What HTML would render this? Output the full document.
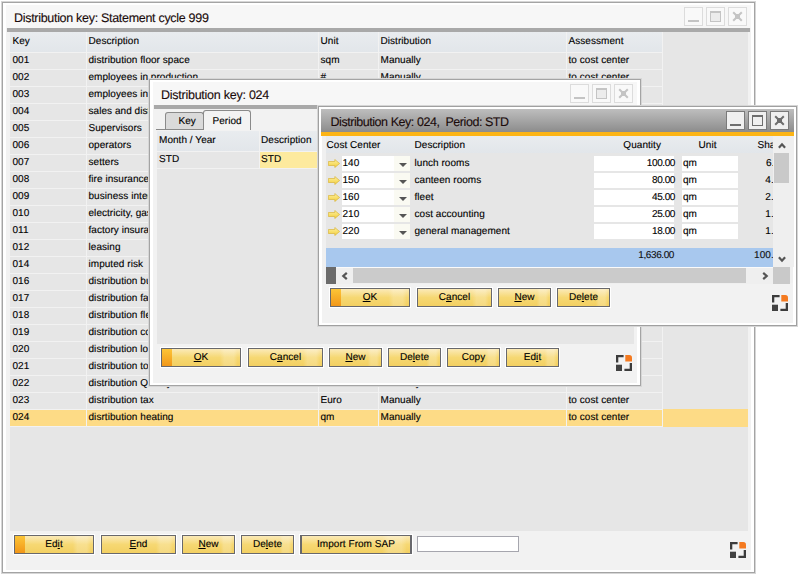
<!DOCTYPE html><html><head><meta charset="utf-8"><style>
html,body{margin:0;padding:0}
body{width:801px;height:578px;background:#fff;position:relative;overflow:hidden;font-family:"Liberation Sans",sans-serif;font-size:10px;color:#000;text-rendering:geometricPrecision}
.b{position:absolute;box-sizing:content-box}
.t{position:absolute;white-space:pre;-webkit-text-stroke:0.12px currentColor}
.win{position:absolute;overflow:hidden}
.btn{position:absolute;border:1px solid #68686c;background:linear-gradient(90deg,rgba(255,255,255,0) 74%,rgba(255,255,255,0.2) 80%,rgba(255,255,255,0.2) 92%,rgba(255,255,255,0) 97%),linear-gradient(#fbeab8 0%,#f6d873 50%,#f3d062 100%);box-shadow:0 0 0 1px #fff;overflow:hidden}
.btn .strip{position:absolute;left:0;top:0;width:10px;height:100%;background:linear-gradient(#fcc537,#f29719)}
.btn .bl{position:absolute;left:0;top:0;text-align:center;font-size:10px;letter-spacing:0.05px;color:#000;-webkit-text-stroke:0.12px currentColor}
u{text-decoration:underline;text-underline-offset:1px;text-decoration-thickness:1px}
</style></head><body>
<div class="b" style="left:2px;top:2px;width:751px;height:569px;border:1px solid #a4a4a4;background:#fff;box-shadow:0 0 0 1px #d6d6d6;"></div>
<div class="b" style="left:6px;top:5px;width:745px;height:565px;background:#f2f2f2;"></div>
<div class="b" style="left:6px;top:5px;width:745px;height:23px;background:#f7f7f7;"></div>
<div class="t" style="left:14px;top:11.47px;font-size:12.5px;line-height:15.0px;color:#1a0a0a;letter-spacing:-0.3px;">Distribution key: Statement cycle 999</div>
<div class="b" style="left:684px;top:7px;width:17px;height:17px;border:1px solid #dcdcdc;background:#f9f9f9;"></div><div class="b" style="left:706px;top:7px;width:17px;height:17px;border:1px solid #dcdcdc;background:#f9f9f9;"></div><div class="b" style="left:728px;top:7px;width:17px;height:17px;border:1px solid #dcdcdc;background:#f9f9f9;"></div><div class="b" style="left:688px;top:20px;width:11px;height:2px;background:#c4c4c4;"></div><div class="b" style="left:710px;top:11px;width:9px;height:8px;border:1px solid #c4c4c4;border-top-width:2px;background:#ececec;"></div><svg class="b" style="left:732px;top:11px" width="11" height="11" viewBox="0 0 11 11"><path d="M1.2 1.2L9.8 9.8M9.8 1.2L1.2 9.8" stroke="#c4c4c4" stroke-width="2"/><rect x="3" y="3" width="5" height="5" fill="#c4c4c4"/></svg>
<div class="b" style="left:7px;top:28px;width:743px;height:4px;background:#a9a9a9;"></div>
<div class="b" style="left:10px;top:32px;width:738px;height:499px;background:#e6e6e6;"></div>
<div class="b" style="left:10px;top:32px;width:652px;height:20px;background:linear-gradient(#e9ecef,#e2e6ea);"></div>
<div class="b" style="left:10px;top:52px;width:652px;height:1px;background:#f2f2f2;"></div>
<div class="t" style="left:12.5px;top:54.53px;font-size:10px;line-height:12.0px;color:#000;letter-spacing:0.05px;">001</div>
<div class="t" style="left:88.5px;top:54.53px;font-size:10px;line-height:12.0px;color:#000;letter-spacing:0.05px;">distribution floor space</div>
<div class="t" style="left:320.5px;top:54.53px;font-size:10px;line-height:12.0px;color:#000;letter-spacing:0.05px;">sqm</div>
<div class="t" style="left:380.5px;top:54.53px;font-size:10px;line-height:12.0px;color:#000;letter-spacing:0.05px;">Manually</div>
<div class="t" style="left:568.5px;top:54.53px;font-size:10px;line-height:12.0px;color:#000;letter-spacing:0.05px;">to cost center</div>
<div class="b" style="left:10px;top:69px;width:652px;height:1px;background:#f2f2f2;"></div>
<div class="t" style="left:12.5px;top:71.53px;font-size:10px;line-height:12.0px;color:#000;letter-spacing:0.05px;">002</div>
<div class="t" style="left:88.5px;top:71.53px;font-size:10px;line-height:12.0px;color:#000;letter-spacing:0.05px;">employees in production</div>
<div class="t" style="left:320.5px;top:71.53px;font-size:10px;line-height:12.0px;color:#000;letter-spacing:0.05px;">#</div>
<div class="t" style="left:380.5px;top:71.53px;font-size:10px;line-height:12.0px;color:#000;letter-spacing:0.05px;">Manually</div>
<div class="t" style="left:568.5px;top:71.53px;font-size:10px;line-height:12.0px;color:#000;letter-spacing:0.05px;">to cost center</div>
<div class="b" style="left:10px;top:86px;width:652px;height:1px;background:#f2f2f2;"></div>
<div class="t" style="left:12.5px;top:88.53px;font-size:10px;line-height:12.0px;color:#000;letter-spacing:0.05px;">003</div>
<div class="t" style="left:88.5px;top:88.53px;font-size:10px;line-height:12.0px;color:#000;letter-spacing:0.05px;">employees in administration</div>
<div class="t" style="left:320.5px;top:88.53px;font-size:10px;line-height:12.0px;color:#000;letter-spacing:0.05px;">#</div>
<div class="t" style="left:380.5px;top:88.53px;font-size:10px;line-height:12.0px;color:#000;letter-spacing:0.05px;">Manually</div>
<div class="t" style="left:568.5px;top:88.53px;font-size:10px;line-height:12.0px;color:#000;letter-spacing:0.05px;">to cost center</div>
<div class="b" style="left:10px;top:103px;width:652px;height:1px;background:#f2f2f2;"></div>
<div class="t" style="left:12.5px;top:105.53px;font-size:10px;line-height:12.0px;color:#000;letter-spacing:0.05px;">004</div>
<div class="t" style="left:88.5px;top:105.53px;font-size:10px;line-height:12.0px;color:#000;letter-spacing:0.05px;">sales and distribution</div>
<div class="t" style="left:320.5px;top:105.53px;font-size:10px;line-height:12.0px;color:#000;letter-spacing:0.05px;">#</div>
<div class="t" style="left:380.5px;top:105.53px;font-size:10px;line-height:12.0px;color:#000;letter-spacing:0.05px;">Manually</div>
<div class="t" style="left:568.5px;top:105.53px;font-size:10px;line-height:12.0px;color:#000;letter-spacing:0.05px;">to cost center</div>
<div class="b" style="left:10px;top:120px;width:652px;height:1px;background:#f2f2f2;"></div>
<div class="t" style="left:12.5px;top:122.53px;font-size:10px;line-height:12.0px;color:#000;letter-spacing:0.05px;">005</div>
<div class="t" style="left:88.5px;top:122.53px;font-size:10px;line-height:12.0px;color:#000;letter-spacing:0.05px;">Supervisors</div>
<div class="t" style="left:320.5px;top:122.53px;font-size:10px;line-height:12.0px;color:#000;letter-spacing:0.05px;">#</div>
<div class="t" style="left:380.5px;top:122.53px;font-size:10px;line-height:12.0px;color:#000;letter-spacing:0.05px;">Manually</div>
<div class="t" style="left:568.5px;top:122.53px;font-size:10px;line-height:12.0px;color:#000;letter-spacing:0.05px;">to cost center</div>
<div class="b" style="left:10px;top:137px;width:652px;height:1px;background:#f2f2f2;"></div>
<div class="t" style="left:12.5px;top:139.53px;font-size:10px;line-height:12.0px;color:#000;letter-spacing:0.05px;">006</div>
<div class="t" style="left:88.5px;top:139.53px;font-size:10px;line-height:12.0px;color:#000;letter-spacing:0.05px;">operators</div>
<div class="t" style="left:320.5px;top:139.53px;font-size:10px;line-height:12.0px;color:#000;letter-spacing:0.05px;">#</div>
<div class="t" style="left:380.5px;top:139.53px;font-size:10px;line-height:12.0px;color:#000;letter-spacing:0.05px;">Manually</div>
<div class="t" style="left:568.5px;top:139.53px;font-size:10px;line-height:12.0px;color:#000;letter-spacing:0.05px;">to cost center</div>
<div class="b" style="left:10px;top:154px;width:652px;height:1px;background:#f2f2f2;"></div>
<div class="t" style="left:12.5px;top:156.53px;font-size:10px;line-height:12.0px;color:#000;letter-spacing:0.05px;">007</div>
<div class="t" style="left:88.5px;top:156.53px;font-size:10px;line-height:12.0px;color:#000;letter-spacing:0.05px;">setters</div>
<div class="t" style="left:320.5px;top:156.53px;font-size:10px;line-height:12.0px;color:#000;letter-spacing:0.05px;">#</div>
<div class="t" style="left:380.5px;top:156.53px;font-size:10px;line-height:12.0px;color:#000;letter-spacing:0.05px;">Manually</div>
<div class="t" style="left:568.5px;top:156.53px;font-size:10px;line-height:12.0px;color:#000;letter-spacing:0.05px;">to cost center</div>
<div class="b" style="left:10px;top:171px;width:652px;height:1px;background:#f2f2f2;"></div>
<div class="t" style="left:12.5px;top:173.53px;font-size:10px;line-height:12.0px;color:#000;letter-spacing:0.05px;">008</div>
<div class="t" style="left:88.5px;top:173.53px;font-size:10px;line-height:12.0px;color:#000;letter-spacing:0.05px;">fire insurance</div>
<div class="t" style="left:320.5px;top:173.53px;font-size:10px;line-height:12.0px;color:#000;letter-spacing:0.05px;">Euro</div>
<div class="t" style="left:380.5px;top:173.53px;font-size:10px;line-height:12.0px;color:#000;letter-spacing:0.05px;">Manually</div>
<div class="t" style="left:568.5px;top:173.53px;font-size:10px;line-height:12.0px;color:#000;letter-spacing:0.05px;">to cost center</div>
<div class="b" style="left:10px;top:188px;width:652px;height:1px;background:#f2f2f2;"></div>
<div class="t" style="left:12.5px;top:190.53px;font-size:10px;line-height:12.0px;color:#000;letter-spacing:0.05px;">009</div>
<div class="t" style="left:88.5px;top:190.53px;font-size:10px;line-height:12.0px;color:#000;letter-spacing:0.05px;">business interruption</div>
<div class="t" style="left:320.5px;top:190.53px;font-size:10px;line-height:12.0px;color:#000;letter-spacing:0.05px;">Euro</div>
<div class="t" style="left:380.5px;top:190.53px;font-size:10px;line-height:12.0px;color:#000;letter-spacing:0.05px;">Manually</div>
<div class="t" style="left:568.5px;top:190.53px;font-size:10px;line-height:12.0px;color:#000;letter-spacing:0.05px;">to cost center</div>
<div class="b" style="left:10px;top:205px;width:652px;height:1px;background:#f2f2f2;"></div>
<div class="t" style="left:12.5px;top:207.53px;font-size:10px;line-height:12.0px;color:#000;letter-spacing:0.05px;">010</div>
<div class="t" style="left:88.5px;top:207.53px;font-size:10px;line-height:12.0px;color:#000;letter-spacing:0.05px;">electricity, gas, water</div>
<div class="t" style="left:320.5px;top:207.53px;font-size:10px;line-height:12.0px;color:#000;letter-spacing:0.05px;">kWh</div>
<div class="t" style="left:380.5px;top:207.53px;font-size:10px;line-height:12.0px;color:#000;letter-spacing:0.05px;">Manually</div>
<div class="t" style="left:568.5px;top:207.53px;font-size:10px;line-height:12.0px;color:#000;letter-spacing:0.05px;">to cost center</div>
<div class="b" style="left:10px;top:222px;width:652px;height:1px;background:#f2f2f2;"></div>
<div class="t" style="left:12.5px;top:224.53px;font-size:10px;line-height:12.0px;color:#000;letter-spacing:0.05px;">011</div>
<div class="t" style="left:88.5px;top:224.53px;font-size:10px;line-height:12.0px;color:#000;letter-spacing:0.05px;">factory insurance</div>
<div class="t" style="left:320.5px;top:224.53px;font-size:10px;line-height:12.0px;color:#000;letter-spacing:0.05px;">Euro</div>
<div class="t" style="left:380.5px;top:224.53px;font-size:10px;line-height:12.0px;color:#000;letter-spacing:0.05px;">Manually</div>
<div class="t" style="left:568.5px;top:224.53px;font-size:10px;line-height:12.0px;color:#000;letter-spacing:0.05px;">to cost center</div>
<div class="b" style="left:10px;top:239px;width:652px;height:1px;background:#f2f2f2;"></div>
<div class="t" style="left:12.5px;top:241.53px;font-size:10px;line-height:12.0px;color:#000;letter-spacing:0.05px;">012</div>
<div class="t" style="left:88.5px;top:241.53px;font-size:10px;line-height:12.0px;color:#000;letter-spacing:0.05px;">leasing</div>
<div class="t" style="left:320.5px;top:241.53px;font-size:10px;line-height:12.0px;color:#000;letter-spacing:0.05px;">Euro</div>
<div class="t" style="left:380.5px;top:241.53px;font-size:10px;line-height:12.0px;color:#000;letter-spacing:0.05px;">Manually</div>
<div class="t" style="left:568.5px;top:241.53px;font-size:10px;line-height:12.0px;color:#000;letter-spacing:0.05px;">to cost center</div>
<div class="b" style="left:10px;top:256px;width:652px;height:1px;background:#f2f2f2;"></div>
<div class="t" style="left:12.5px;top:258.54px;font-size:10px;line-height:12.0px;color:#000;letter-spacing:0.05px;">014</div>
<div class="t" style="left:88.5px;top:258.54px;font-size:10px;line-height:12.0px;color:#000;letter-spacing:0.05px;">imputed risk</div>
<div class="t" style="left:320.5px;top:258.54px;font-size:10px;line-height:12.0px;color:#000;letter-spacing:0.05px;">Euro</div>
<div class="t" style="left:380.5px;top:258.54px;font-size:10px;line-height:12.0px;color:#000;letter-spacing:0.05px;">Manually</div>
<div class="t" style="left:568.5px;top:258.54px;font-size:10px;line-height:12.0px;color:#000;letter-spacing:0.05px;">to cost center</div>
<div class="b" style="left:10px;top:273px;width:652px;height:1px;background:#f2f2f2;"></div>
<div class="t" style="left:12.5px;top:275.54px;font-size:10px;line-height:12.0px;color:#000;letter-spacing:0.05px;">016</div>
<div class="t" style="left:88.5px;top:275.54px;font-size:10px;line-height:12.0px;color:#000;letter-spacing:0.05px;">distribution buildings</div>
<div class="t" style="left:320.5px;top:275.54px;font-size:10px;line-height:12.0px;color:#000;letter-spacing:0.05px;">sqm</div>
<div class="t" style="left:380.5px;top:275.54px;font-size:10px;line-height:12.0px;color:#000;letter-spacing:0.05px;">Manually</div>
<div class="t" style="left:568.5px;top:275.54px;font-size:10px;line-height:12.0px;color:#000;letter-spacing:0.05px;">to cost center</div>
<div class="b" style="left:10px;top:290px;width:652px;height:1px;background:#f2f2f2;"></div>
<div class="t" style="left:12.5px;top:292.54px;font-size:10px;line-height:12.0px;color:#000;letter-spacing:0.05px;">017</div>
<div class="t" style="left:88.5px;top:292.54px;font-size:10px;line-height:12.0px;color:#000;letter-spacing:0.05px;">distribution fair</div>
<div class="t" style="left:320.5px;top:292.54px;font-size:10px;line-height:12.0px;color:#000;letter-spacing:0.05px;">Euro</div>
<div class="t" style="left:380.5px;top:292.54px;font-size:10px;line-height:12.0px;color:#000;letter-spacing:0.05px;">Manually</div>
<div class="t" style="left:568.5px;top:292.54px;font-size:10px;line-height:12.0px;color:#000;letter-spacing:0.05px;">to cost center</div>
<div class="b" style="left:10px;top:307px;width:652px;height:1px;background:#f2f2f2;"></div>
<div class="t" style="left:12.5px;top:309.54px;font-size:10px;line-height:12.0px;color:#000;letter-spacing:0.05px;">018</div>
<div class="t" style="left:88.5px;top:309.54px;font-size:10px;line-height:12.0px;color:#000;letter-spacing:0.05px;">distribution fleet</div>
<div class="t" style="left:320.5px;top:309.54px;font-size:10px;line-height:12.0px;color:#000;letter-spacing:0.05px;">km</div>
<div class="t" style="left:380.5px;top:309.54px;font-size:10px;line-height:12.0px;color:#000;letter-spacing:0.05px;">Manually</div>
<div class="t" style="left:568.5px;top:309.54px;font-size:10px;line-height:12.0px;color:#000;letter-spacing:0.05px;">to cost center</div>
<div class="b" style="left:10px;top:324px;width:652px;height:1px;background:#f2f2f2;"></div>
<div class="t" style="left:12.5px;top:326.54px;font-size:10px;line-height:12.0px;color:#000;letter-spacing:0.05px;">019</div>
<div class="t" style="left:88.5px;top:326.54px;font-size:10px;line-height:12.0px;color:#000;letter-spacing:0.05px;">distribution computers</div>
<div class="t" style="left:320.5px;top:326.54px;font-size:10px;line-height:12.0px;color:#000;letter-spacing:0.05px;">#</div>
<div class="t" style="left:380.5px;top:326.54px;font-size:10px;line-height:12.0px;color:#000;letter-spacing:0.05px;">Manually</div>
<div class="t" style="left:568.5px;top:326.54px;font-size:10px;line-height:12.0px;color:#000;letter-spacing:0.05px;">to cost center</div>
<div class="b" style="left:10px;top:341px;width:652px;height:1px;background:#f2f2f2;"></div>
<div class="t" style="left:12.5px;top:343.54px;font-size:10px;line-height:12.0px;color:#000;letter-spacing:0.05px;">020</div>
<div class="t" style="left:88.5px;top:343.54px;font-size:10px;line-height:12.0px;color:#000;letter-spacing:0.05px;">distribution logistics</div>
<div class="t" style="left:320.5px;top:343.54px;font-size:10px;line-height:12.0px;color:#000;letter-spacing:0.05px;">#</div>
<div class="t" style="left:380.5px;top:343.54px;font-size:10px;line-height:12.0px;color:#000;letter-spacing:0.05px;">Manually</div>
<div class="t" style="left:568.5px;top:343.54px;font-size:10px;line-height:12.0px;color:#000;letter-spacing:0.05px;">to cost center</div>
<div class="b" style="left:10px;top:358px;width:652px;height:1px;background:#f2f2f2;"></div>
<div class="t" style="left:12.5px;top:360.54px;font-size:10px;line-height:12.0px;color:#000;letter-spacing:0.05px;">021</div>
<div class="t" style="left:88.5px;top:360.54px;font-size:10px;line-height:12.0px;color:#000;letter-spacing:0.05px;">distribution tools</div>
<div class="t" style="left:320.5px;top:360.54px;font-size:10px;line-height:12.0px;color:#000;letter-spacing:0.05px;">#</div>
<div class="t" style="left:380.5px;top:360.54px;font-size:10px;line-height:12.0px;color:#000;letter-spacing:0.05px;">Manually</div>
<div class="t" style="left:568.5px;top:360.54px;font-size:10px;line-height:12.0px;color:#000;letter-spacing:0.05px;">to cost center</div>
<div class="b" style="left:10px;top:375px;width:652px;height:1px;background:#f2f2f2;"></div>
<div class="t" style="left:12.5px;top:377.54px;font-size:10px;line-height:12.0px;color:#000;letter-spacing:0.05px;">022</div>
<div class="t" style="left:88.5px;top:377.54px;font-size:10px;line-height:12.0px;color:#000;letter-spacing:0.05px;">distribution Quality</div>
<div class="t" style="left:320.5px;top:377.54px;font-size:10px;line-height:12.0px;color:#000;letter-spacing:0.05px;">#</div>
<div class="t" style="left:380.5px;top:377.54px;font-size:10px;line-height:12.0px;color:#000;letter-spacing:0.05px;">Manually</div>
<div class="t" style="left:568.5px;top:377.54px;font-size:10px;line-height:12.0px;color:#000;letter-spacing:0.05px;">to cost center</div>
<div class="b" style="left:10px;top:392px;width:652px;height:1px;background:#f2f2f2;"></div>
<div class="t" style="left:12.5px;top:394.54px;font-size:10px;line-height:12.0px;color:#000;letter-spacing:0.05px;">023</div>
<div class="t" style="left:88.5px;top:394.54px;font-size:10px;line-height:12.0px;color:#000;letter-spacing:0.05px;">distribution tax</div>
<div class="t" style="left:320.5px;top:394.54px;font-size:10px;line-height:12.0px;color:#000;letter-spacing:0.05px;">Euro</div>
<div class="t" style="left:380.5px;top:394.54px;font-size:10px;line-height:12.0px;color:#000;letter-spacing:0.05px;">Manually</div>
<div class="t" style="left:568.5px;top:394.54px;font-size:10px;line-height:12.0px;color:#000;letter-spacing:0.05px;">to cost center</div>
<div class="b" style="left:10px;top:409px;width:652px;height:1px;background:#f2f2f2;"></div>
<div class="b" style="left:10px;top:410px;width:738px;height:16px;background:#fddb86;"></div>
<div class="b" style="left:663px;top:409px;width:85px;height:18px;background:#fddb86;"></div>
<div class="t" style="left:12.5px;top:411.54px;font-size:10px;line-height:12.0px;color:#000;letter-spacing:0.05px;">024</div>
<div class="t" style="left:88.5px;top:411.54px;font-size:10px;line-height:12.0px;color:#000;letter-spacing:0.05px;">disrtibution heating</div>
<div class="t" style="left:320.5px;top:411.54px;font-size:10px;line-height:12.0px;color:#000;letter-spacing:0.05px;">qm</div>
<div class="t" style="left:380.5px;top:411.54px;font-size:10px;line-height:12.0px;color:#000;letter-spacing:0.05px;">Manually</div>
<div class="t" style="left:568.5px;top:411.54px;font-size:10px;line-height:12.0px;color:#000;letter-spacing:0.05px;">to cost center</div>
<div class="b" style="left:10px;top:426px;width:652px;height:1px;background:#f2f2f2;"></div>
<div class="b" style="left:86px;top:32px;width:1px;height:395px;background:#f2f2f2;"></div>
<div class="b" style="left:318px;top:32px;width:1px;height:395px;background:#f2f2f2;"></div>
<div class="b" style="left:378px;top:32px;width:1px;height:395px;background:#f2f2f2;"></div>
<div class="b" style="left:566px;top:32px;width:1px;height:395px;background:#f2f2f2;"></div>
<div class="b" style="left:662px;top:32px;width:1px;height:395px;background:#f2f2f2;"></div>
<div class="t" style="left:12.5px;top:36.03px;font-size:10px;line-height:12.0px;color:#000;letter-spacing:0.05px;">Key</div>
<div class="t" style="left:88.5px;top:36.03px;font-size:10px;line-height:12.0px;color:#000;letter-spacing:0.05px;">Description</div>
<div class="t" style="left:320.5px;top:36.03px;font-size:10px;line-height:12.0px;color:#000;letter-spacing:0.05px;">Unit</div>
<div class="t" style="left:380.5px;top:36.03px;font-size:10px;line-height:12.0px;color:#000;letter-spacing:0.05px;">Distribution</div>
<div class="t" style="left:568.5px;top:36.03px;font-size:10px;line-height:12.0px;color:#000;letter-spacing:0.05px;">Assessment</div>
<div class="btn" style="left:14px;top:535px;width:78px;height:17px;"><div class="strip"></div><div class="bl" style="width:78px;line-height:17px">Ed<u>i</u>t</div></div>
<div class="btn" style="left:101px;top:535px;width:73px;height:17px;"><div class="bl" style="width:73px;line-height:17px"><u>E</u>nd</div></div>
<div class="btn" style="left:182px;top:535px;width:51px;height:17px;"><div class="bl" style="width:51px;line-height:17px"><u>N</u>ew</div></div>
<div class="btn" style="left:241px;top:535px;width:51px;height:17px;"><div class="bl" style="width:51px;line-height:17px">De<u>l</u>ete</div></div>
<div class="btn" style="left:300px;top:535px;width:108px;height:17px;border-width:1px 2px 1px 2px;"><div class="bl" style="width:108px;line-height:17px">Import From SAP</div></div>
<div class="b" style="left:417px;top:536px;width:100px;height:14px;border:1px solid #a6a6ae;background:#fff;"></div>
<svg class="b" style="left:730px;top:542px" width="16" height="16" viewBox="0 0 16 16">
<path d="M0 0H7.6V2.3H2.3V7.6H0Z" fill="#3c3c3c"/>
<path d="M9.3 0H13.3Q16 0 16 2.7V6.6H9.3Z" fill="#f47a20"/>
<rect x="0" y="9.7" width="6" height="6.3" fill="#414141"/>
<path d="M13.7 8H16V16H8.4V13.7H13.7Z" fill="#3c3c3c"/>
</svg>
<div class="b" style="left:149px;top:79px;width:490px;height:305px;border:1px solid #a4a4a4;background:#fff;box-shadow:0 0 0 1px #d6d6d6;"></div>
<div class="b" style="left:153px;top:82px;width:484px;height:301px;background:#f2f2f2;"></div>
<div class="b" style="left:153px;top:82px;width:484px;height:23px;background:#f7f7f7;"></div>
<div class="t" style="left:161px;top:87.67px;font-size:12.5px;line-height:15.0px;color:#1a0a0a;letter-spacing:-0.25px;">Distribution key: 024</div>
<div class="b" style="left:570px;top:84px;width:17px;height:17px;border:1px solid #dcdcdc;background:#f9f9f9;"></div><div class="b" style="left:592px;top:84px;width:17px;height:17px;border:1px solid #dcdcdc;background:#f9f9f9;"></div><div class="b" style="left:614px;top:84px;width:17px;height:17px;border:1px solid #dcdcdc;background:#f9f9f9;"></div><div class="b" style="left:574px;top:97px;width:11px;height:2px;background:#c4c4c4;"></div><div class="b" style="left:596px;top:88px;width:9px;height:8px;border:1px solid #c4c4c4;border-top-width:2px;background:#ececec;"></div><svg class="b" style="left:618px;top:88px" width="11" height="11" viewBox="0 0 11 11"><path d="M1.2 1.2L9.8 9.8M9.8 1.2L1.2 9.8" stroke="#c4c4c4" stroke-width="2"/><rect x="3" y="3" width="5" height="5" fill="#c4c4c4"/></svg>
<div class="b" style="left:154px;top:105px;width:481px;height:4px;background:#a9a9a9;"></div>
<div class="b" style="left:165px;top:112px;width:37px;height:17px;border:1px solid #8a8a8a;border-bottom:none;border-radius:3px 3px 0 0;background:#dadada;"></div>
<div class="b" style="left:203px;top:110px;width:46px;height:19px;border:1px solid #8a8a8a;border-bottom:none;border-radius:3px 3px 0 0;background:#f3f3f3;"></div>
<div class="b" style="left:156px;top:129px;width:47px;height:1px;background:#8a8a8a;"></div>
<div class="t" style="left:178.5px;top:116.03px;font-size:10px;line-height:12.0px;color:#000;letter-spacing:0.05px;">Key</div>
<div class="t" style="left:212.5px;top:116.03px;font-size:10px;line-height:12.0px;color:#000;letter-spacing:0.05px;">Period</div>
<div class="b" style="left:157px;top:131px;width:477px;height:213px;background:#e6e6e6;"></div>
<div class="b" style="left:157px;top:131px;width:477px;height:20px;background:linear-gradient(#e9ecef,#e2e6ea);"></div>
<div class="b" style="left:157px;top:151px;width:477px;height:1px;background:#f2f2f2;"></div>
<div class="b" style="left:157px;top:168px;width:477px;height:1px;background:#f2f2f2;"></div>
<div class="b" style="left:259px;top:131px;width:1px;height:37px;background:#f2f2f2;"></div>
<div class="b" style="left:260px;top:152px;width:374px;height:16px;background:#fdea9e;"></div>
<div class="t" style="left:159px;top:135.03px;font-size:10px;line-height:12.0px;color:#000;letter-spacing:0.05px;">Month / Year</div>
<div class="t" style="left:261px;top:135.03px;font-size:10px;line-height:12.0px;color:#000;letter-spacing:0.05px;">Description</div>
<div class="t" style="left:159px;top:154.03px;font-size:10px;line-height:12.0px;color:#000;letter-spacing:0.05px;">STD</div>
<div class="t" style="left:261px;top:154.03px;font-size:10px;line-height:12.0px;color:#000;letter-spacing:0.05px;">STD</div>
<div class="btn" style="left:161px;top:348px;width:78px;height:17px;"><div class="strip"></div><div class="bl" style="width:78px;line-height:17px"><u>O</u>K</div></div>
<div class="btn" style="left:248px;top:348px;width:73px;height:17px;"><div class="bl" style="width:73px;line-height:17px">C<u>a</u>ncel</div></div>
<div class="btn" style="left:329px;top:348px;width:51px;height:17px;"><div class="bl" style="width:51px;line-height:17px"><u>N</u>ew</div></div>
<div class="btn" style="left:388px;top:348px;width:51px;height:17px;"><div class="bl" style="width:51px;line-height:17px">De<u>l</u>ete</div></div>
<div class="btn" style="left:447px;top:348px;width:51px;height:17px;"><div class="bl" style="width:51px;line-height:17px">Copy</div></div>
<div class="btn" style="left:506px;top:348px;width:51px;height:17px;"><div class="bl" style="width:51px;line-height:17px">Ed<u>i</u>t</div></div>
<svg class="b" style="left:616px;top:355px" width="16" height="16" viewBox="0 0 16 16">
<path d="M0 0H7.6V2.3H2.3V7.6H0Z" fill="#3c3c3c"/>
<path d="M9.3 0H13.3Q16 0 16 2.7V6.6H9.3Z" fill="#f47a20"/>
<rect x="0" y="9.7" width="6" height="6.3" fill="#414141"/>
<path d="M13.7 8H16V16H8.4V13.7H13.7Z" fill="#3c3c3c"/>
</svg>
<div class="b" style="left:318px;top:106px;width:477px;height:218px;border:1px solid #a0a0a0;background:#fff;box-shadow:0 0 0 1px #d6d6d6;"></div>
<div class="b" style="left:322px;top:109px;width:471px;height:214px;background:#f2f2f2;"></div>
<div class="b" style="left:321px;top:109px;width:473px;height:23px;background:linear-gradient(#bebebe,#8c8c8c);"></div>
<div class="b" style="left:321px;top:132px;width:473px;height:4px;background:#fcb415;"></div>
<div class="t" style="left:330.5px;top:114.67px;font-size:12.5px;line-height:15.0px;color:#1a0a0a;letter-spacing:-0.45px;">Distribution Key: 024,  Period: STD</div>
<div class="b" style="left:726px;top:111px;width:17px;height:17px;border:1px solid #7a7a7a;background:#f0f0f0;"></div><div class="b" style="left:748px;top:111px;width:17px;height:17px;border:1px solid #7a7a7a;background:#f0f0f0;"></div><div class="b" style="left:770px;top:111px;width:17px;height:17px;border:1px solid #7a7a7a;background:#f0f0f0;"></div><div class="b" style="left:730px;top:124px;width:11px;height:2px;background:#6e6e6e;"></div><div class="b" style="left:752px;top:115px;width:9px;height:8px;border:1px solid #6e6e6e;border-top-width:2px;background:#f0f0f0;"></div><svg class="b" style="left:774px;top:115px" width="11" height="11" viewBox="0 0 11 11"><path d="M1.2 1.2L9.8 9.8M9.8 1.2L1.2 9.8" stroke="#6e6e6e" stroke-width="2"/><rect x="3" y="3" width="5" height="5" fill="#6e6e6e"/></svg>
<div class="b" style="left:322px;top:136px;width:471px;height:147px;background:#f0f0f0;"></div>
<div class="b" style="left:326px;top:136px;width:447px;height:131px;background:#e6e6e6;"></div>
<div class="b" style="left:326px;top:136px;width:447px;height:17px;background:linear-gradient(#e9ecef,#e2e6ea);"></div>
<div class="t" style="left:326.5px;top:140.03px;font-size:10px;line-height:12.0px;color:#000;letter-spacing:0.05px;">Cost Center</div>
<div class="t" style="left:414.5px;top:140.03px;font-size:10px;line-height:12.0px;color:#000;letter-spacing:0.05px;">Description</div>
<div class="t" style="left:594px;top:140.03px;font-size:10px;line-height:12.0px;color:#000;width:67px;text-align:right;letter-spacing:0.05px;">Quantity</div>
<div class="t" style="left:698.5px;top:140.03px;font-size:10px;line-height:12.0px;color:#000;letter-spacing:0.05px;">Unit</div>
<div class="t" style="left:757.5px;top:140.03px;font-size:10px;line-height:12.0px;color:#000;letter-spacing:0.05px;">Share</div>
<svg class="b" style="left:328px;top:158.8px" width="12" height="9" viewBox="0 0 12 9"><defs><linearGradient id="ag0" x1="0" y1="0" x2="0" y2="1"><stop offset="0" stop-color="#fdf0a0"/><stop offset="1" stop-color="#f3cf3a"/></linearGradient></defs><path d="M0.4 2.5H6.8V0.5L11.6 4.5L6.8 8.5V6.5H0.4Z" fill="url(#ag0)" stroke="#d9b53c" stroke-width="0.7"/></svg>
<div class="b" style="left:342px;top:156px;width:52px;height:15px;background:#fff;"></div>
<div class="b" style="left:394px;top:156px;width:16px;height:15px;background:#fafaf2;"></div>
<svg class="b" style="left:399px;top:163px" width="8" height="4" viewBox="0 0 8 4"><path d="M0 0H8L4 4Z" fill="#555"/></svg>
<div class="t" style="left:342.5px;top:157.53px;font-size:10px;line-height:12.0px;color:#000;letter-spacing:0.05px;">140</div>
<div class="t" style="left:414.5px;top:157.53px;font-size:10px;line-height:12.0px;color:#000;letter-spacing:0.05px;">lunch rooms</div>
<div class="b" style="left:594px;top:156px;width:80px;height:15px;background:#fff;"></div>
<div class="t" style="left:594px;top:157.53px;font-size:10px;line-height:12.0px;color:#000;width:81px;text-align:right;letter-spacing:-0.4px;">100.00</div>
<div class="b" style="left:682px;top:156px;width:56px;height:15px;background:#fff;"></div>
<div class="t" style="left:683px;top:157.53px;font-size:10px;line-height:12.0px;color:#000;letter-spacing:0.05px;">qm</div>
<div class="t" style="left:735px;top:157.53px;font-size:10px;line-height:12.0px;color:#000;width:50px;text-align:right;letter-spacing:0.05px;">6.11</div>
<svg class="b" style="left:328px;top:175.8px" width="12" height="9" viewBox="0 0 12 9"><defs><linearGradient id="ag1" x1="0" y1="0" x2="0" y2="1"><stop offset="0" stop-color="#fdf0a0"/><stop offset="1" stop-color="#f3cf3a"/></linearGradient></defs><path d="M0.4 2.5H6.8V0.5L11.6 4.5L6.8 8.5V6.5H0.4Z" fill="url(#ag1)" stroke="#d9b53c" stroke-width="0.7"/></svg>
<div class="b" style="left:342px;top:173px;width:52px;height:15px;background:#fff;"></div>
<div class="b" style="left:394px;top:173px;width:16px;height:15px;background:#fafaf2;"></div>
<svg class="b" style="left:399px;top:180px" width="8" height="4" viewBox="0 0 8 4"><path d="M0 0H8L4 4Z" fill="#555"/></svg>
<div class="t" style="left:342.5px;top:174.53px;font-size:10px;line-height:12.0px;color:#000;letter-spacing:0.05px;">150</div>
<div class="t" style="left:414.5px;top:174.53px;font-size:10px;line-height:12.0px;color:#000;letter-spacing:0.05px;">canteen rooms</div>
<div class="b" style="left:594px;top:173px;width:80px;height:15px;background:#fff;"></div>
<div class="t" style="left:594px;top:174.53px;font-size:10px;line-height:12.0px;color:#000;width:81px;text-align:right;letter-spacing:-0.4px;">80.00</div>
<div class="b" style="left:682px;top:173px;width:56px;height:15px;background:#fff;"></div>
<div class="t" style="left:683px;top:174.53px;font-size:10px;line-height:12.0px;color:#000;letter-spacing:0.05px;">qm</div>
<div class="t" style="left:735px;top:174.53px;font-size:10px;line-height:12.0px;color:#000;width:50px;text-align:right;letter-spacing:0.05px;">4.89</div>
<svg class="b" style="left:328px;top:192.8px" width="12" height="9" viewBox="0 0 12 9"><defs><linearGradient id="ag2" x1="0" y1="0" x2="0" y2="1"><stop offset="0" stop-color="#fdf0a0"/><stop offset="1" stop-color="#f3cf3a"/></linearGradient></defs><path d="M0.4 2.5H6.8V0.5L11.6 4.5L6.8 8.5V6.5H0.4Z" fill="url(#ag2)" stroke="#d9b53c" stroke-width="0.7"/></svg>
<div class="b" style="left:342px;top:190px;width:52px;height:15px;background:#fff;"></div>
<div class="b" style="left:394px;top:190px;width:16px;height:15px;background:#fafaf2;"></div>
<svg class="b" style="left:399px;top:197px" width="8" height="4" viewBox="0 0 8 4"><path d="M0 0H8L4 4Z" fill="#555"/></svg>
<div class="t" style="left:342.5px;top:191.53px;font-size:10px;line-height:12.0px;color:#000;letter-spacing:0.05px;">160</div>
<div class="t" style="left:414.5px;top:191.53px;font-size:10px;line-height:12.0px;color:#000;letter-spacing:0.05px;">fleet</div>
<div class="b" style="left:594px;top:190px;width:80px;height:15px;background:#fff;"></div>
<div class="t" style="left:594px;top:191.53px;font-size:10px;line-height:12.0px;color:#000;width:81px;text-align:right;letter-spacing:-0.4px;">45.00</div>
<div class="b" style="left:682px;top:190px;width:56px;height:15px;background:#fff;"></div>
<div class="t" style="left:683px;top:191.53px;font-size:10px;line-height:12.0px;color:#000;letter-spacing:0.05px;">qm</div>
<div class="t" style="left:735px;top:191.53px;font-size:10px;line-height:12.0px;color:#000;width:50px;text-align:right;letter-spacing:0.05px;">2.75</div>
<svg class="b" style="left:328px;top:209.8px" width="12" height="9" viewBox="0 0 12 9"><defs><linearGradient id="ag3" x1="0" y1="0" x2="0" y2="1"><stop offset="0" stop-color="#fdf0a0"/><stop offset="1" stop-color="#f3cf3a"/></linearGradient></defs><path d="M0.4 2.5H6.8V0.5L11.6 4.5L6.8 8.5V6.5H0.4Z" fill="url(#ag3)" stroke="#d9b53c" stroke-width="0.7"/></svg>
<div class="b" style="left:342px;top:207px;width:52px;height:15px;background:#fff;"></div>
<div class="b" style="left:394px;top:207px;width:16px;height:15px;background:#fafaf2;"></div>
<svg class="b" style="left:399px;top:214px" width="8" height="4" viewBox="0 0 8 4"><path d="M0 0H8L4 4Z" fill="#555"/></svg>
<div class="t" style="left:342.5px;top:208.53px;font-size:10px;line-height:12.0px;color:#000;letter-spacing:0.05px;">210</div>
<div class="t" style="left:414.5px;top:208.53px;font-size:10px;line-height:12.0px;color:#000;letter-spacing:0.05px;">cost accounting</div>
<div class="b" style="left:594px;top:207px;width:80px;height:15px;background:#fff;"></div>
<div class="t" style="left:594px;top:208.53px;font-size:10px;line-height:12.0px;color:#000;width:81px;text-align:right;letter-spacing:-0.4px;">25.00</div>
<div class="b" style="left:682px;top:207px;width:56px;height:15px;background:#fff;"></div>
<div class="t" style="left:683px;top:208.53px;font-size:10px;line-height:12.0px;color:#000;letter-spacing:0.05px;">qm</div>
<div class="t" style="left:735px;top:208.53px;font-size:10px;line-height:12.0px;color:#000;width:50px;text-align:right;letter-spacing:0.05px;">1.53</div>
<svg class="b" style="left:328px;top:226.8px" width="12" height="9" viewBox="0 0 12 9"><defs><linearGradient id="ag4" x1="0" y1="0" x2="0" y2="1"><stop offset="0" stop-color="#fdf0a0"/><stop offset="1" stop-color="#f3cf3a"/></linearGradient></defs><path d="M0.4 2.5H6.8V0.5L11.6 4.5L6.8 8.5V6.5H0.4Z" fill="url(#ag4)" stroke="#d9b53c" stroke-width="0.7"/></svg>
<div class="b" style="left:342px;top:224px;width:52px;height:15px;background:#fff;"></div>
<div class="b" style="left:394px;top:224px;width:16px;height:15px;background:#fafaf2;"></div>
<svg class="b" style="left:399px;top:231px" width="8" height="4" viewBox="0 0 8 4"><path d="M0 0H8L4 4Z" fill="#555"/></svg>
<div class="t" style="left:342.5px;top:225.53px;font-size:10px;line-height:12.0px;color:#000;letter-spacing:0.05px;">220</div>
<div class="t" style="left:414.5px;top:225.53px;font-size:10px;line-height:12.0px;color:#000;letter-spacing:0.05px;">general management</div>
<div class="b" style="left:594px;top:224px;width:80px;height:15px;background:#fff;"></div>
<div class="t" style="left:594px;top:225.53px;font-size:10px;line-height:12.0px;color:#000;width:81px;text-align:right;letter-spacing:-0.4px;">18.00</div>
<div class="b" style="left:682px;top:224px;width:56px;height:15px;background:#fff;"></div>
<div class="t" style="left:683px;top:225.53px;font-size:10px;line-height:12.0px;color:#000;letter-spacing:0.05px;">qm</div>
<div class="t" style="left:735px;top:225.53px;font-size:10px;line-height:12.0px;color:#000;width:50px;text-align:right;letter-spacing:0.05px;">1.10</div>
<div class="b" style="left:773px;top:136px;width:21px;height:131px;background:#efefef;"></div>
<div class="b" style="left:326px;top:248px;width:447px;height:19px;background:#a8c8ee;"></div>
<div class="t" style="left:594px;top:250.03px;font-size:10px;line-height:12.0px;color:#111;width:80px;text-align:right;letter-spacing:-0.4px;">1,636.00</div>
<div class="t" style="left:735px;top:250.03px;font-size:10px;line-height:12.0px;color:#111;width:50px;text-align:right;letter-spacing:0.05px;">100.00</div>
<div class="b" style="left:773px;top:136px;width:21px;height:131px;background:#efefef;"></div>
<div class="b" style="left:774px;top:153px;width:15px;height:30px;background:#c9c9c9;"></div>
<svg class="b" style="left:777.5px;top:141.8px" width="8" height="7" viewBox="0 0 8 7"><path d="M0.9 5.8L4 2.3L7.1 5.8" fill="none" stroke="#555" stroke-width="2.2"/></svg>
<svg class="b" style="left:777.5px;top:255.6px" width="8" height="7" viewBox="0 0 8 7"><path d="M0.9 1.2L4 4.7L7.1 1.2" fill="none" stroke="#555" stroke-width="2.2"/></svg>
<div class="b" style="left:326px;top:267px;width:464px;height:17px;background:#efefef;"></div>
<div class="b" style="left:336px;top:267px;width:437px;height:1px;background:#fafafa;"></div>
<div class="b" style="left:326px;top:267px;width:10px;height:17px;background:#6b6b6b;"></div>
<div class="b" style="left:353px;top:268px;width:393px;height:15px;background:#cbcbcb;"></div>
<div class="b" style="left:773px;top:267px;width:17px;height:17px;background:#c9c9c9;"></div>
<svg class="b" style="left:340.5px;top:271.5px" width="7" height="8" viewBox="0 0 7 8"><path d="M5.8 0.9L2.3 4L5.8 7.1" fill="none" stroke="#555" stroke-width="2.2"/></svg>
<svg class="b" style="left:761.5px;top:271.5px" width="7" height="8" viewBox="0 0 7 8"><path d="M1.2 0.9L4.7 4L1.2 7.1" fill="none" stroke="#555" stroke-width="2.2"/></svg>
<div class="btn" style="left:330px;top:288px;width:78px;height:17px;"><div class="strip"></div><div class="bl" style="width:78px;line-height:17px"><u>O</u>K</div></div>
<div class="btn" style="left:417px;top:288px;width:73px;height:17px;"><div class="bl" style="width:73px;line-height:17px">C<u>a</u>ncel</div></div>
<div class="btn" style="left:498px;top:288px;width:51px;height:17px;"><div class="bl" style="width:51px;line-height:17px"><u>N</u>ew</div></div>
<div class="btn" style="left:557px;top:288px;width:51px;height:17px;"><div class="bl" style="width:51px;line-height:17px">De<u>l</u>ete</div></div>
<svg class="b" style="left:772px;top:295px" width="16" height="16" viewBox="0 0 16 16">
<path d="M0 0H7.6V2.3H2.3V7.6H0Z" fill="#3c3c3c"/>
<path d="M9.3 0H13.3Q16 0 16 2.7V6.6H9.3Z" fill="#f47a20"/>
<rect x="0" y="9.7" width="6" height="6.3" fill="#414141"/>
<path d="M13.7 8H16V16H8.4V13.7H13.7Z" fill="#3c3c3c"/>
</svg>
</body></html>
